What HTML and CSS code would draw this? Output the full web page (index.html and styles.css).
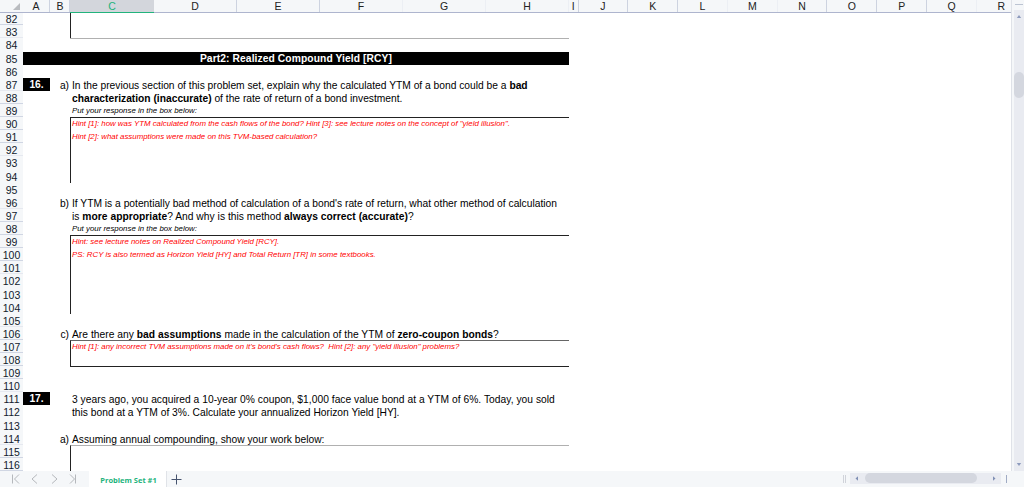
FILE: index.html
```html
<!DOCTYPE html>
<html lang="en">
<head>
  <meta charset="UTF-8" />
  <title>Problem Set #1</title>
  <link rel="stylesheet" href="styles.css">
</head>
<body>
  <div class="workspace">
    <div class="sheet">
      <div class="columns">
        <div class="corner"><svg width="7" height="7" viewBox="0 0 7 7"><path d="M7 0V7H0Z" fill="#b9bcc0"/></svg></div>
        <div class="col a">A</div><div class="col b">B</div><div class="col wide selected">C</div><div class="col wide">D</div><div class="col wide">E</div><div class="col wide faint">F</div><div class="col wide faint">G</div><div class="col wide faint">H</div><div class="col i">I</div><div class="col">J</div><div class="col">K</div><div class="col faint">L</div><div class="col faint">M</div><div class="col">N</div><div class="col">O</div><div class="col">P</div><div class="col faint">Q</div><div class="col faint">R</div>
      </div>
      <div class="rows">
        <div class="row"><div class="num">82</div><div class="label"></div><div class="cell box"></div></div>
        <div class="row"><div class="num">83</div><div class="label"></div><div class="cell box"></div></div>
        <div class="row"><div class="num">84</div><div class="label"></div><div class="cell top gray"></div></div>
        <div class="row"><div class="num">85</div><div class="banner">Part2: Realized Compound Yield [RCY]</div></div>
        <div class="row"><div class="num">86</div></div>
        <div class="row"><div class="num">87</div><div class="tag">16.</div><div class="letter">a)</div><div class="cell">In the previous section of this problem set, explain why the calculated YTM of a bond could be a <b>bad</b></div></div>
        <div class="row"><div class="num">88</div><div class="label"></div><div class="cell"><b>characterization (inaccurate)</b> of the rate of return of a bond investment.</div></div>
        <div class="row"><div class="num">89</div><div class="label"></div><div class="cell note">Put your response in the box below:</div></div>
        <div class="row"><div class="num">90</div><div class="label"></div><div class="cell box top hint">Hint [1]: how was YTM calculated from the cash flows of the bond? Hint [3]: see lecture notes on the concept of "yield illusion".</div></div>
        <div class="row"><div class="num">91</div><div class="label"></div><div class="cell box hint">Hint [2]: what assumptions were made on this TVM-based calculation?</div></div>
        <div class="row"><div class="num">92</div><div class="label"></div><div class="cell box"></div></div>
        <div class="row"><div class="num">93</div><div class="label"></div><div class="cell box"></div></div>
        <div class="row"><div class="num">94</div><div class="label"></div><div class="cell box"></div></div>
        <div class="row"><div class="num">95</div></div>
        <div class="row"><div class="num">96</div><div class="tag blank"></div><div class="letter">b)</div><div class="cell">If YTM is a potentially bad method of calculation of a bond's rate of return, what other method of calculation</div></div>
        <div class="row"><div class="num">97</div><div class="label"></div><div class="cell loose">is <b>more appropriate</b>? And why is this method <b>always correct (accurate)</b>?</div></div>
        <div class="row"><div class="num">98</div><div class="label"></div><div class="cell note">Put your response in the box below:</div></div>
        <div class="row"><div class="num">99</div><div class="label"></div><div class="cell box top hint">Hint: see lecture notes on Realized Compound Yield [RCY].</div></div>
        <div class="row"><div class="num">100</div><div class="label"></div><div class="cell box hint">PS: RCY is also termed as Horizon Yield [HY] and Total Return [TR] in some textbooks.</div></div>
        <div class="row"><div class="num">101</div><div class="label"></div><div class="cell box"></div></div>
        <div class="row"><div class="num">102</div><div class="label"></div><div class="cell box"></div></div>
        <div class="row"><div class="num">103</div><div class="label"></div><div class="cell box"></div></div>
        <div class="row"><div class="num">104</div><div class="label"></div><div class="cell box"></div></div>
        <div class="row"><div class="num">105</div></div>
        <div class="row"><div class="num">106</div><div class="tag blank"></div><div class="letter">c)</div><div class="cell loose">Are there any <b>bad assumptions</b> made in the calculation of the YTM of <b>zero-coupon bonds</b>?</div></div>
        <div class="row"><div class="num">107</div><div class="label"></div><div class="cell box top mid hint">Hint [1]: any incorrect TVM assumptions made on it's bond's cash flows?&nbsp; Hint [2]: any "yield illusion" problems?</div></div>
        <div class="row"><div class="num">108</div><div class="label"></div><div class="cell box"></div></div>
        <div class="row"><div class="num">109</div><div class="label"></div><div class="cell top"></div></div>
        <div class="row"><div class="num">110</div></div>
        <div class="row"><div class="num">111</div><div class="tag">17.</div><div class="letter"></div><div class="cell loose">3 years ago, you acquired a 10-year 0% coupon, $1,000 face value bond at a YTM of 6%. Today, you sold</div></div>
        <div class="row"><div class="num">112</div><div class="label"></div><div class="cell">this bond at a YTM of 3%. Calculate your annualized Horizon Yield [HY].</div></div>
        <div class="row"><div class="num">113</div></div>
        <div class="row"><div class="num">114</div><div class="tag blank"></div><div class="letter">a)</div><div class="cell">Assuming annual compounding, show your work below:</div></div>
        <div class="row"><div class="num">115</div><div class="label"></div><div class="cell box top gray"></div></div>
        <div class="row"><div class="num">116</div><div class="label"></div><div class="cell box"></div></div>
      </div>
    </div>
    <div class="vscroll">
      <div class="split"></div>
      <div class="vtrack">
        <svg width="10" height="14" viewBox="0 0 10 14"><path d="M5 5L7.2 8H2.8Z" fill="#8d9bbd"/></svg>
        <div class="vthumb"></div>
        <svg class="down" width="10" height="14" viewBox="0 0 10 14"><path d="M5 9L7.2 6H2.8Z" fill="#8d9bbd"/></svg>
      </div>
    </div>
  </div>
  <div class="bottom">
    <svg class="nav" width="89" height="16" viewBox="0 0 89 16" fill="none" stroke="#b5b8bc" stroke-width="1">
      <path d="M12.5 3.5V12.5M19 3.5L14.5 8L19 12.5M37 3.5L32 8L37 12.5M52 3.5L57 8L52 12.5M70 3.5L74.5 8L70 12.5M75.5 3.5V12.5"/>
    </svg>
    <div class="tab">Problem Set #1</div>
    <svg width="20" height="16" viewBox="0 0 20 16" stroke="#46536e"><path d="M4.5 8.5H14.5M9.5 3.5V13.5"/></svg>
    <div class="grip"></div>
    <div class="htrack">
      <svg width="15" height="11" viewBox="0 0 15 11"><path d="M5.5 5.5L8 3.3V7.7Z" fill="#8090b5"/></svg>
      <div class="hthumb"></div>
      <svg class="right" width="15" height="11" viewBox="0 0 15 11"><path d="M9.5 5.5L7 3.3V7.7Z" fill="#8090b5"/></svg>
    </div>
    <div class="end"></div>
  </div>
</body>
</html>
```
FILE: styles.css
```css
body {
  margin: 0;
  width: 1024px;
  height: 487px;
  overflow: hidden;
  background: #fff;
  color: #000;
  font-family: "Liberation Sans", Arial, sans-serif;
  font-size: 10.26px;
  display: flex;
  flex-direction: column;
}
.workspace {
  display: flex;
  height: 470.5px;
  flex: none;
  overflow: hidden;
}
.sheet {
  width: 1011px;
  overflow: hidden;
}
.columns {
  display: flex;
  height: 13px;
  margin-bottom: -0.8px;
  box-sizing: border-box;
  background: #f5f7f9;
  border-bottom: 1px solid #aeb5ce;
  position: relative;
  z-index: 1;
}
.corner {
  width: 23px;
  flex: none;
  display: flex;
  justify-content: flex-end;
  align-items: flex-end;
  padding: 0 3px 2px 0;
  box-sizing: border-box;
}
.col {
  width: 49.8px;
  flex: none;
  box-sizing: border-box;
  border-right: 1px solid #cdd3e0;
  text-align: center;
  font-size: 10.5px;
  line-height: 13px;
  color: #222;
}
.col.a { width: 27px; }
.col.b { width: 20px; padding-left: 1px; }
.col.wide { width: 83px; }
.col.i { width: 9.5px; }
.col.faint { border-right-color: #eceff4; }
.col.selected {
  width: 84px;
  background: #d3d6dc;
  color: #22b37c;
  height: 13px;
  border-bottom: 1px solid #22b37c;
  border-right: none;
}
.row {
  display: flex;
  height: 13.12px;
  line-height: 14px;
  white-space: nowrap;
}
.num {
  width: 23px;
  flex: none;
  text-align: center;
  box-sizing: border-box;
  background: #f5f7f9;
  border-bottom: 1px solid #f5f7f9;
  font-size: 10.5px;
  line-height: 14.6px;
  color: #111a2c;
}
.row:nth-child(9n+1) .num,
.row:nth-child(9n+7) .num,
.row:nth-child(9n+8) .num,
.row:nth-child(9n+9) .num {
  border-bottom-color: #d0d6e3;
}
.row:nth-child(9n+2) .num,
.row:nth-child(9n+6) .num {
  border-bottom-color: #e6e9f0;
}
.label { width: 47px; flex: none; }
.tag {
  width: 27px;
  flex: none;
  background: #000;
  color: #fff;
  font-weight: bold;
  text-align: center;
}
.tag.blank { background: none; }
.letter {
  width: 19px;
  padding-right: 1px;
  text-align: right;
  flex: none;
  line-height: 15px;
}
.cell {
  width: 499px;
  box-sizing: border-box;
  padding-left: 2px;
  line-height: 15px;
}
.cell.loose { letter-spacing: 0.03px; }
.box {
  border-left: 1px solid #222;
  padding-left: 1px;
}
.top { border-top: 1px solid #222; }
.top.gray { border-top-color: #b0b0b0; }
.top.mid { border-top-color: #666; }
.banner {
  width: 546px;
  background: #000;
  color: #fff;
  font-weight: bold;
  text-align: center;
  line-height: 14px;
  letter-spacing: 0.1px;
}
.cell.note,
.cell.hint {
  font-size: 7.86px;
  font-style: italic;
  line-height: 13px;
}
.cell.hint { color: #f00; }
.cell.top.hint { line-height: 12px; }
.vscroll {
  width: 12px;
  border-left: 1px solid #dfe2e8;
  background: #f5f7f9;
  display: flex;
  flex-direction: column;
  align-items: flex-end;
}
.split {
  width: 8px;
  height: 1px;
  margin: 4px 1px 5px;
  background: #bcc4d2;
}
.vtrack {
  width: 10px;
  flex: 1;
  background: #e9ebf1;
  display: flex;
  flex-direction: column;
}
.vthumb {
  height: 26px;
  margin-top: 48px;
  border-radius: 5px;
  background: #d4d7df;
}
.down { margin-top: auto; }
.bottom {
  display: flex;
  height: 16.5px;
  background: #f5f7f9;
  align-items: center;
}
.tab {
  width: 78px;
  height: 100%;
  background: #fff;
  border-right: 1px solid #e0e3e8;
  box-sizing: border-box;
  padding-left: 2px;
  text-align: center;
  font: bold 7.5px/18px "Open Sans", sans-serif;
  color: #22b37c;
}
.grip {
  width: 1px;
  height: 8px;
  margin-left: auto;
  margin-right: 4px;
  border-left: 1px solid #d0d3da;
  border-right: 1px solid #d0d3da;
}
.htrack {
  width: 151px;
  height: 11px;
  background: #e9ebf1;
  display: flex;
}
.hthumb {
  width: 112px;
  height: 10px;
  border-radius: 5px;
  background: #d4d7df;
}
.right { margin-left: auto; }
.end {
  width: 1px;
  height: 8px;
  margin: 0 17px 0 5px;
  background: #a0abc4;
}
```
